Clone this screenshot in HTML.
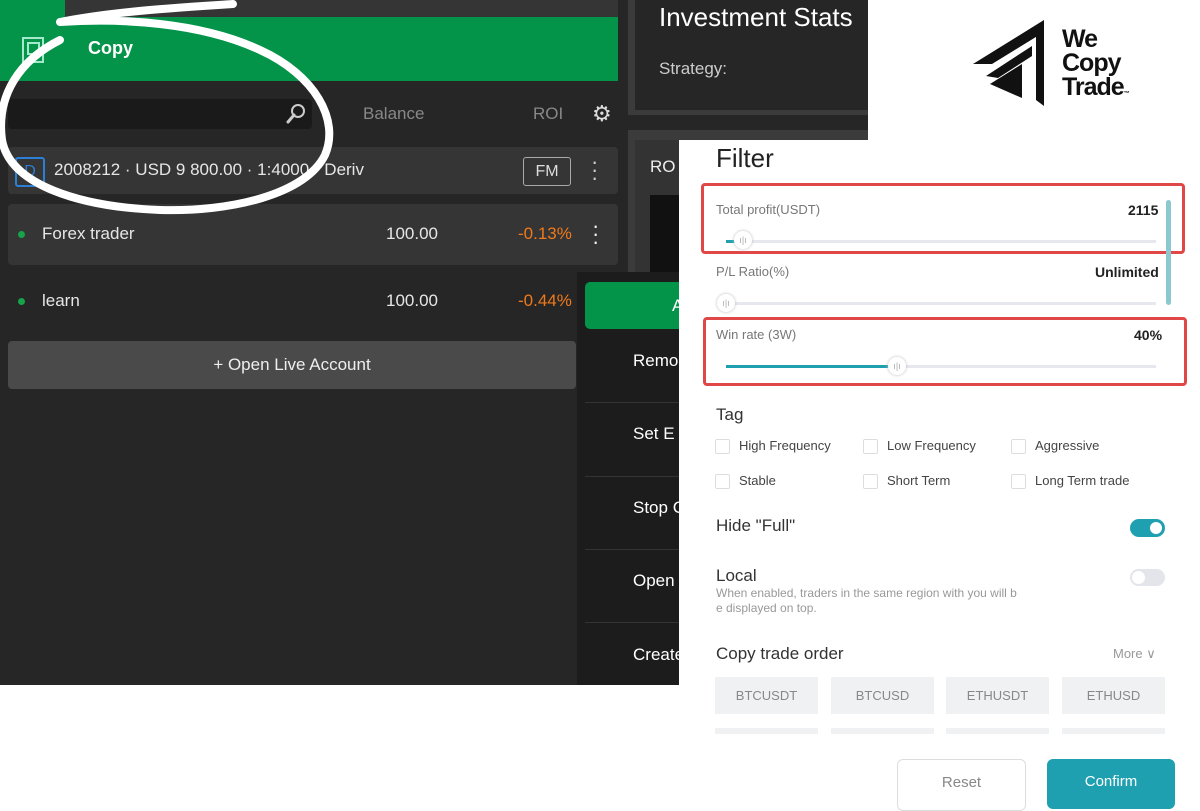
<!DOCTYPE html>
<html><head><meta charset="utf-8"><style>
body{margin:0;width:1200px;height:800px;position:relative;overflow:hidden;background:#fff;font-family:"Liberation Sans",sans-serif}
.a{position:absolute}
.dk{color:#e6e6e6}
.fl{font-size:13px;color:#777}
.cb{position:absolute;width:13px;height:13px;border:1px solid #ddd;border-radius:2px}
.tg{position:absolute;font-size:13px;color:#444}
.pill{position:absolute;top:677px;width:103px;height:37px;background:#f0f1f3;color:#888;font-size:13px;text-align:center;line-height:37px}
.pill2{position:absolute;top:728px;width:103px;height:6px;background:#f0f1f3}
.th{position:absolute;width:18px;height:18px;border-radius:50%;background:#fff;box-shadow:0 0 3px #bbb;font-size:9px;color:#aaa;text-align:center;line-height:18px}
</style></head><body>
<div class="a" style="left:0;top:0;width:679px;height:685px;background:#262626"></div>
<div class="a" style="left:620px;top:0;width:248px;height:140px;background:#262626"></div>
<div class="a" style="left:0;top:0;width:65px;height:17px;background:#03944a"></div>
<div class="a" style="left:65px;top:0;width:553px;height:17px;background:#353535"></div>
<div class="a" style="left:0;top:17px;width:618px;height:64px;background:#03944a"></div>
<div class="a" style="left:22px;top:37px;width:18px;height:22px;border:2px solid #cfe;opacity:.8"></div>
<div class="a" style="left:27px;top:42px;width:9px;height:9px;border:2px solid #cfe;opacity:.8"></div>
<div class="a" style="left:88px;top:38px;font-size:18px;font-weight:bold;color:#fff">Copy</div>
<div class="a" style="left:8px;top:99px;width:304px;height:30px;background:#1a1a1a;border-radius:4px"></div>
<svg class="a" style="left:285px;top:103px" width="22" height="22"><circle cx="13" cy="8" r="6" fill="none" stroke="#ccc" stroke-width="2"/><line x1="9" y1="12" x2="3" y2="19" stroke="#ccc" stroke-width="3" stroke-linecap="round"/></svg>
<div class="a" style="left:363px;top:104px;font-size:17px;color:#888">Balance</div>
<div class="a" style="left:533px;top:104px;font-size:17px;color:#888">ROI</div>
<div class="a" style="left:592px;top:101px;font-size:22px;color:#ddd">⚙</div>
<div class="a" style="left:8px;top:147px;width:610px;height:47px;background:#353535;border-radius:4px"></div>
<div class="a" style="left:15px;top:157px;width:26px;height:26px;border:2px solid #2a7fd6;border-radius:3px;color:#2a7fd6;font-size:16px;text-align:center;line-height:26px">D</div>
<div class="a dk" style="left:54px;top:160px;font-size:17px">2008212 · USD 9 800.00 · 1:4000 · Deriv</div>
<div class="a" style="left:523px;top:157px;width:46px;height:27px;border:1px solid #aaa;border-radius:3px;color:#ddd;font-size:16px;text-align:center;line-height:27px">FM</div>
<div class="a" style="left:591px;top:158px;font-size:22px;color:#ccc;line-height:8px">·<br>·<br>·</div>
<div class="a" style="left:8px;top:204px;width:610px;height:61px;background:#353535;border-radius:4px"></div>
<div class="a" style="left:18px;top:231px;width:7px;height:7px;border-radius:50%;background:#16a34a"></div>
<div class="a dk" style="left:42px;top:224px;font-size:17px">Forex trader</div>
<div class="a dk" style="left:386px;top:224px;font-size:17px">100.00</div>
<div class="a" style="left:518px;top:224px;font-size:17px;color:#f07a1a">-0.13%</div>
<div class="a" style="left:592px;top:222px;font-size:22px;color:#eee;line-height:8px">·<br>·<br>·</div>
<div class="a" style="left:18px;top:298px;width:7px;height:7px;border-radius:50%;background:#16a34a"></div>
<div class="a dk" style="left:42px;top:291px;font-size:17px">learn</div>
<div class="a dk" style="left:386px;top:291px;font-size:17px">100.00</div>
<div class="a" style="left:518px;top:291px;font-size:17px;color:#f07a1a">-0.44%</div>
<div class="a" style="left:8px;top:341px;width:568px;height:48px;background:#4a4a4a;border-radius:4px;color:#eee;font-size:17px;text-align:center;line-height:48px">+ Open Live Account</div>
<div class="a" style="left:628px;top:0;width:240px;height:115px;background:#3b3b3b"></div>
<div class="a" style="left:635px;top:0;width:233px;height:110px;background:#262626"></div>
<div class="a" style="left:659px;top:2px;font-size:26px;color:#fff">Investment Stats</div>
<div class="a" style="left:659px;top:59px;font-size:17px;color:#ccc">Strategy:</div>
<div class="a" style="left:628px;top:130px;width:240px;height:160px;background:#3b3b3b"></div>
<div class="a" style="left:635px;top:140px;width:233px;height:150px;background:#333"></div>
<div class="a" style="left:650px;top:157px;font-size:17px;color:#eee">RO</div>
<div class="a" style="left:650px;top:195px;width:40px;height:80px;background:#111"></div>
<div class="a" style="left:577px;top:272px;width:102px;height:413px;background:#1c1c1c"></div>
<div class="a" style="left:585px;top:282px;width:94px;height:47px;background:#03944a;border-radius:5px 0 0 5px;color:#fff;font-size:17px;line-height:47px;padding-left:87px;box-sizing:border-box;overflow:hidden">A</div>
<div class="a" style="left:585px;top:402px;width:94px;height:1px;background:#333"></div>
<div class="a" style="left:585px;top:476px;width:94px;height:1px;background:#333"></div>
<div class="a" style="left:585px;top:549px;width:94px;height:1px;background:#333"></div>
<div class="a" style="left:585px;top:622px;width:94px;height:1px;background:#333"></div>
<div class="a" style="left:633px;top:351px;font-size:17px;color:#fff">Remo</div>
<div class="a" style="left:633px;top:424px;font-size:17px;color:#fff">Set E</div>
<div class="a" style="left:633px;top:498px;font-size:17px;color:#fff">Stop C</div>
<div class="a" style="left:633px;top:571px;font-size:17px;color:#fff">Open</div>
<div class="a" style="left:633px;top:645px;font-size:17px;color:#fff">Create</div>
<div class="a" style="left:679px;top:140px;width:521px;height:660px;background:#fff"></div>
<div class="a" style="left:868px;top:0;width:332px;height:140px;background:#fff"></div>
<svg class="a" style="left:0;top:0" width="680" height="240"><path d="M233 4 C170 8 110 12 60 22 M60 22 C120 18 200 22 260 50 C315 75 340 120 325 155 C305 195 230 212 160 210 C80 207 10 185 2 140 C-4 95 20 60 60 40" fill="none" stroke="#fff" stroke-width="8" stroke-linecap="round"/></svg>
<svg class="a" style="left:970px;top:16px" width="90" height="92"><polygon points="3,48 74,4 74,16 22,48" fill="#111"/><polygon points="16,60 62,30 62,40 28,62" fill="#111"/><polygon points="20,68 52,48 52,82" fill="#111"/><polygon points="66,20 74,14 74,90 66,84" fill="#111"/></svg>
<div class="a" style="left:1062px;top:27px;font-size:25px;font-weight:bold;color:#111;line-height:24px;letter-spacing:-1px">We<br>Copy<br>Trade<span style="font-size:6px">™</span></div>
<div class="a" style="left:716px;top:143px;font-size:26px;color:#222">Filter</div>
<div class="a" style="left:701px;top:183px;width:484px;height:71px;border:3px solid #e04848;border-radius:4px;box-sizing:border-box"></div>
<div class="a" style="left:703px;top:317px;width:484px;height:69px;border:3px solid #e04848;border-radius:4px;box-sizing:border-box"></div>
<div class="a" style="left:1166px;top:200px;width:5px;height:105px;background:#8cc8d0;border-radius:3px"></div>
<div class="a fl" style="left:716px;top:202px">Total profit(USDT)</div>
<div class="a" style="left:1128px;top:202px;font-size:14px;font-weight:bold;color:#222">2115</div>
<div class="a" style="left:726px;top:240px;width:430px;height:3px;background:#e6e8ee"></div>
<div class="a" style="left:726px;top:240px;width:14px;height:3px;background:#1fa0b0"></div>
<div class="th" style="left:734px;top:231px">ı|ı</div>
<div class="a fl" style="left:716px;top:264px">P/L Ratio(%)</div>
<div class="a" style="left:1095px;top:264px;font-size:14px;font-weight:bold;color:#222">Unlimited</div>
<div class="a" style="left:726px;top:302px;width:430px;height:3px;background:#e6e8ee"></div>
<div class="th" style="left:717px;top:294px">ı|ı</div>
<div class="a fl" style="left:716px;top:327px">Win rate (3W)</div>
<div class="a" style="left:1134px;top:327px;font-size:14px;font-weight:bold;color:#222">40%</div>
<div class="a" style="left:726px;top:365px;width:430px;height:3px;background:#e6e8ee"></div>
<div class="a" style="left:726px;top:365px;width:166px;height:3px;background:#1fa0b0"></div>
<div class="th" style="left:888px;top:357px">ı|ı</div>
<div class="a" style="left:716px;top:405px;font-size:17px;color:#333">Tag</div>
<div class="cb" style="left:715px;top:439px"></div><div class="tg" style="left:739px;top:438px">High Frequency</div>
<div class="cb" style="left:863px;top:439px"></div><div class="tg" style="left:887px;top:438px">Low Frequency</div>
<div class="cb" style="left:1011px;top:439px"></div><div class="tg" style="left:1035px;top:438px">Aggressive</div>
<div class="cb" style="left:715px;top:474px"></div><div class="tg" style="left:739px;top:473px">Stable</div>
<div class="cb" style="left:863px;top:474px"></div><div class="tg" style="left:887px;top:473px">Short Term</div>
<div class="cb" style="left:1011px;top:474px"></div><div class="tg" style="left:1035px;top:473px">Long Term trade</div>
<div class="a" style="left:716px;top:516px;font-size:17px;color:#333">Hide "Full"</div>
<div class="a" style="left:1130px;top:519px;width:35px;height:18px;border-radius:9px;background:#1fa0b0"></div>
<div class="a" style="left:1150px;top:522px;width:12px;height:12px;border-radius:50%;background:#fff"></div>
<div class="a" style="left:716px;top:566px;font-size:17px;color:#333">Local</div>
<div class="a" style="left:716px;top:586px;font-size:12px;color:#999;line-height:15px">When enabled, traders in the same region with you will b<br>e displayed on top.</div>
<div class="a" style="left:1130px;top:569px;width:35px;height:17px;border-radius:9px;background:#e3e5ea"></div>
<div class="a" style="left:1132px;top:571px;width:13px;height:13px;border-radius:50%;background:#fff"></div>
<div class="a" style="left:716px;top:644px;font-size:17px;color:#333">Copy trade order</div>
<div class="a" style="left:1113px;top:646px;font-size:13px;color:#999">More ∨</div>
<div class="pill" style="left:715px">BTCUSDT</div><div class="pill" style="left:831px">BTCUSD</div><div class="pill" style="left:946px">ETHUSDT</div><div class="pill" style="left:1062px">ETHUSD</div>
<div class="pill2" style="left:715px"></div><div class="pill2" style="left:831px"></div><div class="pill2" style="left:946px"></div><div class="pill2" style="left:1062px"></div>
<div class="a" style="left:897px;top:759px;width:127px;height:50px;border:1px solid #ddd;border-radius:6px;color:#888;font-size:15px;text-align:center;line-height:46px">Reset</div>
<div class="a" style="left:1047px;top:759px;width:128px;height:50px;background:#1fa0b0;border-radius:6px;color:#fff;font-size:15px;text-align:center;line-height:46px">Confirm</div>
</body></html>
